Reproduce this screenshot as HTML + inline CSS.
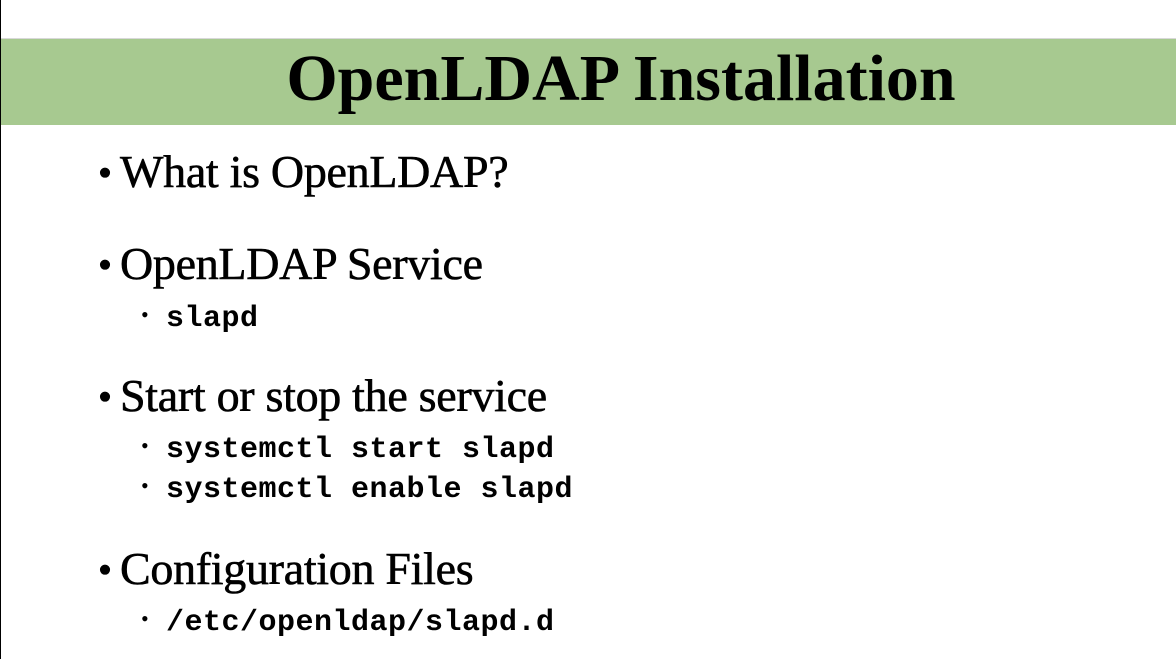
<!DOCTYPE html>
<html><head><meta charset="utf-8"><style>
html,body{margin:0;padding:0}
body{width:1176px;height:659px;position:relative;overflow:hidden;background:#fff}
.lb{position:absolute;left:0;top:0;width:1px;height:659px;background:#000}
.band{position:absolute;left:1px;top:38px;width:1175px;height:86px;background:#a7c990;border-top:1px solid #d8d8d8}
.title{position:absolute;left:0;width:1176px;top:46px;text-align:center;font:bold 66px/1 "Liberation Serif",serif;color:#000;padding-left:66px;box-sizing:border-box}
.b{position:absolute;left:98px;font:46px/1 "Liberation Serif",serif;color:#000;white-space:nowrap;letter-spacing:-0.3px;-webkit-text-stroke:0.6px #000}
.b span{display:inline-block;width:22px;font-size:40px;vertical-align:1px}
.s{position:absolute;left:141px;font:bold 30px/1 "Liberation Mono",monospace;color:#000;white-space:nowrap;letter-spacing:0.5px}
.s span{display:inline-block;width:25px;font:22px/1 "Liberation Serif",serif;vertical-align:4px}
</style></head><body>
<div class="lb"></div>
<div class="band"></div>
<div class="title">OpenLDAP Installation</div>
<div class="b" style="top:149px"><span>•</span>What is OpenLDAP?</div>
<div class="b" style="top:241px"><span>•</span>OpenLDAP Service</div>
<div class="s" style="top:304px"><span>•</span>slapd</div>
<div class="b" style="top:373px"><span>•</span>Start or stop the service</div>
<div class="s" style="top:435px"><span>•</span>systemctl start slapd</div>
<div class="s" style="top:475px"><span>•</span>systemctl enable slapd</div>
<div class="b" style="top:546px"><span>•</span>Configuration Files</div>
<div class="s" style="top:608px"><span>•</span>/etc/openldap/slapd.d</div>
</body></html>
